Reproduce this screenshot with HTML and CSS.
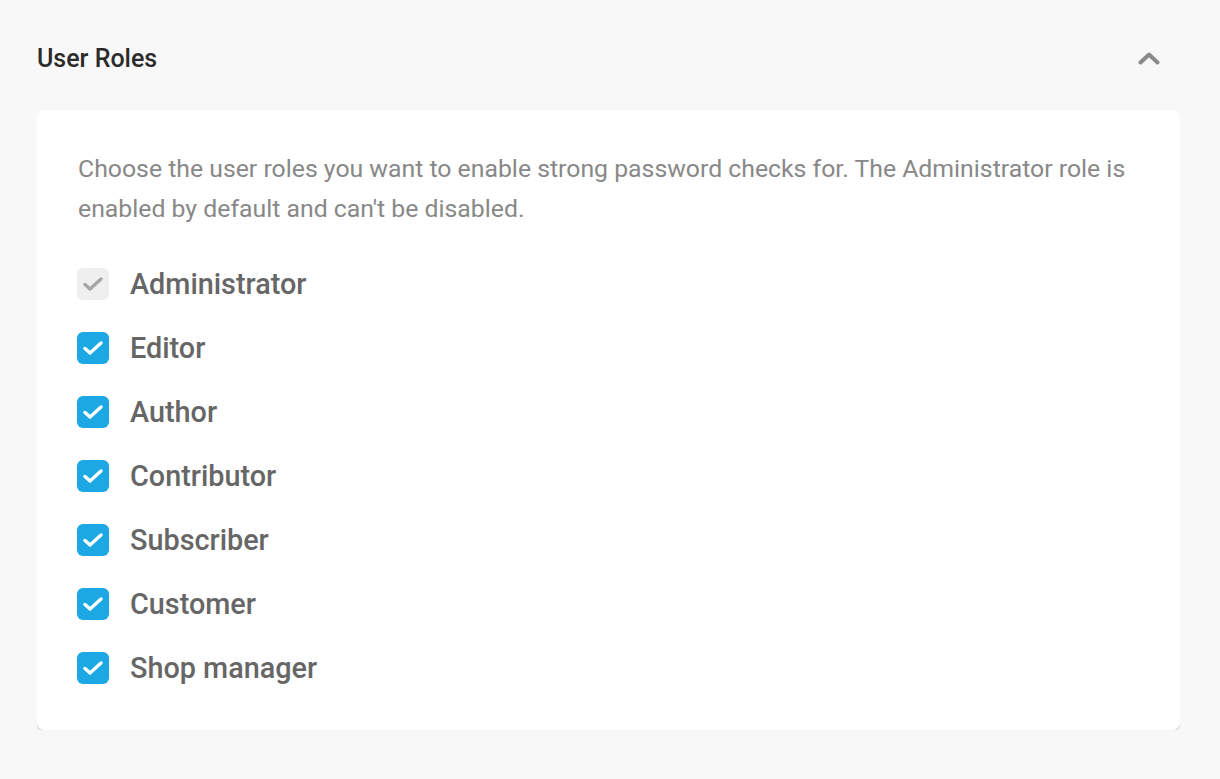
FILE: index.html
```html
<!DOCTYPE html>
<html>
<head>
<meta charset="utf-8">
<link rel="stylesheet" href="styles.css">
</head>
<body>
<div class="page">
  <div class="header">
    <h2 class="title">User Roles</h2>
    <button class="toggle" aria-label="Collapse">
      <svg width="22" height="14" viewBox="0 0 22 14"><path d="M2.5 11.5 L11 3.5 L19.5 11.5" fill="none" stroke="#8a8a8a" stroke-width="4" stroke-linecap="round" stroke-linejoin="round"/></svg>
    </button>
  </div>
  <div class="card">
    <p class="desc">Choose the user roles you want to enable strong password checks for. The Administrator role is enabled by default and can't be disabled.</p>
    <ul class="roles">
      <li class="role"><span class="box disabled"><svg width="20" height="16" viewBox="0 0 20 16"><path d="M2 8.5 L7 13 L18 3" fill="none" stroke="#a6a6a6" stroke-width="3.4" stroke-linecap="round" stroke-linejoin="round"/></svg></span><span class="label">Administrator</span></li>
      <li class="role"><span class="box"><svg width="20" height="16" viewBox="0 0 20 16"><path d="M2 8.5 L7 13 L18 3" fill="none" stroke="#fff" stroke-width="3.4" stroke-linecap="round" stroke-linejoin="round"/></svg></span><span class="label">Editor</span></li>
      <li class="role"><span class="box"><svg width="20" height="16" viewBox="0 0 20 16"><path d="M2 8.5 L7 13 L18 3" fill="none" stroke="#fff" stroke-width="3.4" stroke-linecap="round" stroke-linejoin="round"/></svg></span><span class="label">Author</span></li>
      <li class="role"><span class="box"><svg width="20" height="16" viewBox="0 0 20 16"><path d="M2 8.5 L7 13 L18 3" fill="none" stroke="#fff" stroke-width="3.4" stroke-linecap="round" stroke-linejoin="round"/></svg></span><span class="label">Contributor</span></li>
      <li class="role"><span class="box"><svg width="20" height="16" viewBox="0 0 20 16"><path d="M2 8.5 L7 13 L18 3" fill="none" stroke="#fff" stroke-width="3.4" stroke-linecap="round" stroke-linejoin="round"/></svg></span><span class="label">Subscriber</span></li>
      <li class="role"><span class="box"><svg width="20" height="16" viewBox="0 0 20 16"><path d="M2 8.5 L7 13 L18 3" fill="none" stroke="#fff" stroke-width="3.4" stroke-linecap="round" stroke-linejoin="round"/></svg></span><span class="label">Customer</span></li>
      <li class="role"><span class="box"><svg width="20" height="16" viewBox="0 0 20 16"><path d="M2 8.5 L7 13 L18 3" fill="none" stroke="#fff" stroke-width="3.4" stroke-linecap="round" stroke-linejoin="round"/></svg></span><span class="label">Shop manager</span></li>
    </ul>
  </div>
</div>
</body>
</html>
```

FILE: styles.css
```css
html, body {
  margin: 0;
  padding: 0;
  background: #f8f8f8;
  font-family: Roboto, "Liberation Sans", Arial, sans-serif;
}
.page {
  padding: 38px 40px 0 37px;
}
.header {
  display: flex;
  align-items: center;
  justify-content: space-between;
  height: 40px;
  margin-bottom: 32px;
}
.title {
  margin: 0;
  font-size: 25px;
  font-weight: 500;
  color: #2b2b2b;
}
.toggle {
  border: 0;
  background: none;
  padding: 0;
  margin-right: 20px;
  display: flex;
  align-items: center;
  cursor: pointer;
}
.card {
  background: #fff;
  border-radius: 8px;
  box-shadow: 0 3px 0 #e0e0e0;
  padding: 39px 40px 46px 40px;
}
.desc {
  margin: 0 0 39px 1px;
  font-size: 24.8px;
  line-height: 40px;
  color: #888;
}
.roles {
  list-style: none;
  margin: 0;
  padding: 0;
  display: flex;
  flex-direction: column;
  gap: 32px;
}
.role {
  display: flex;
  align-items: center;
  gap: 21px;
  height: 32px;
}
.box {
  width: 32px;
  height: 32px;
  border-radius: 6px;
  background: #1ca8e3;
  display: flex;
  align-items: center;
  justify-content: center;
  flex: none;
}
.box.disabled {
  background: #efefef;
}
.label {
  font-size: 28.8px;
  font-weight: 500;
  color: #666;
}
```
